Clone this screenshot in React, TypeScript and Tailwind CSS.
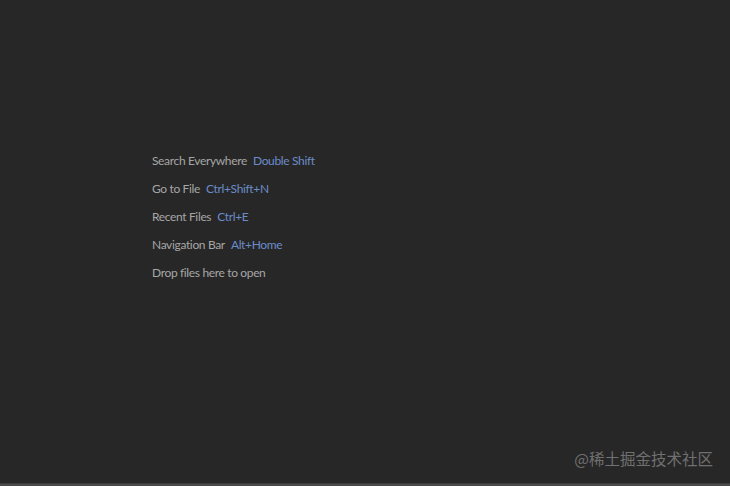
import React from "react";

const hints = [
  { label: "Search Everywhere", keys: "Double Shift" },
  { label: "Go to File", keys: "Ctrl+Shift+N" },
  { label: "Recent Files", keys: "Ctrl+E" },
  { label: "Navigation Bar", keys: "Alt+Home" },
  { label: "Drop files here to open", keys: "" },
];

export default function App() {
  return (
    <div className="flex h-[486px] w-[730px] flex-col bg-[#272727] font-['Lato',sans-serif]">
      <div className="flex flex-1 flex-col pl-[152px] pt-[152px]">
        {hints.map((h) => (
          <div
            key={h.label}
            className="flex h-[28px] items-start gap-[6px] text-[12px] leading-[18px] tracking-[-0.35px]"
          >
            <span className="text-[#a6a6a6]">{h.label}</span>
            {h.keys && <span className="text-[#6b8cc8]">{h.keys}</span>}
          </div>
        ))}
      </div>
      <div className="flex justify-end pb-[14px] pr-[17px]">
        <span className="font-['Noto_Sans_CJK_SC',sans-serif] text-[15.5px] leading-[22px] text-[#707070]">
          @稀土掘金技术社区
        </span>
      </div>
      <div className="h-[1px] bg-[#3c3c3c]" />
      <div className="h-[2px] bg-[#4a4a4a]" />
    </div>
  );
}
